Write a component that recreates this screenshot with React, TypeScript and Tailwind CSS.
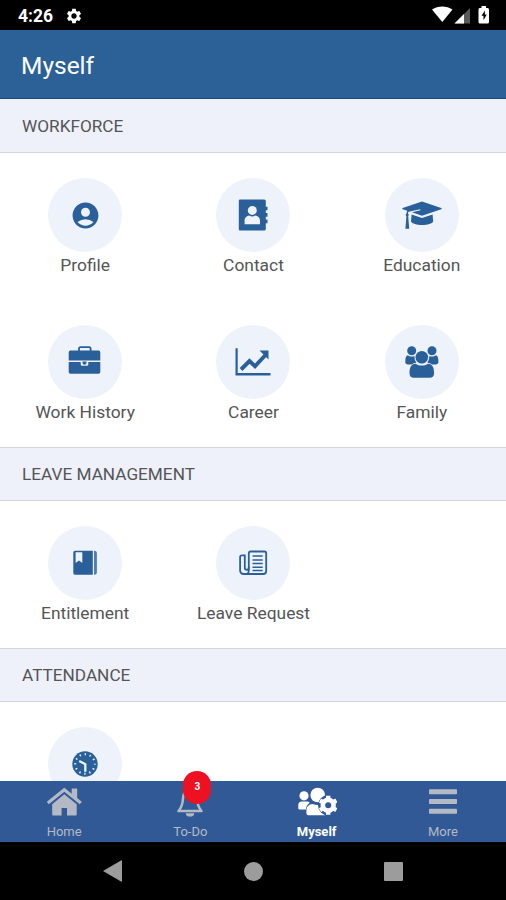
import type { ReactNode } from "react";
import { MdAccountCircle, MdSettings } from "react-icons/md";
import { clsx } from "clsx";

type MenuItem = {
  id: string;
  label?: string;
  icon: ReactNode;
};

type Section = {
  title: string;
  items: MenuItem[];
};

function TileIcon({ children }: { children: ReactNode }) {
  return (
    <svg viewBox="0 0 48 48" className="h-12 w-12" fill="currentColor">
      {children}
    </svg>
  );
}

const sections: Section[] = [
  {
    title: "WORKFORCE",
    items: [
      {
        id: "profile",
        label: "Profile",
        icon: <MdAccountCircle className="h-[31px] w-[31px]" />,
      },
      {
        id: "contact",
        label: "Contact",
        icon: (
          <TileIcon>
            <path d="M11 8.5h24.3a1.5 1.5 0 0 1 1.5 1.5v28a1.5 1.5 0 0 1-1.5 1.5H11a1.2 1.2 0 0 1-1.2-1.2V9.7A1.2 1.2 0 0 1 11 8.500z" />
            <path d="M36 15.700h2.500v3.600H36zM36 22h2.500v3.800H36zM36 28.600h2.500v3.600H36z" />
            <circle cx="23.300" cy="19.400" r="4.500" className="text-[#eef2fb]" />
            <path
              className="text-[#eef2fb]"
              d="M15.600 33.300v-3.600c0-3.200 2.300-5 4.800-5.200.9.6 1.800.9 2.900.9s2-.3 2.900-.9c2.500.2 4.800 2 4.800 5.200v3.600z"
            />
          </TileIcon>
        ),
      },
      {
        id: "education",
        label: "Education",
        icon: (
          <TileIcon>
            <path d="M24 10.500 43.200 17a.7.7 0 0 1 0 1.300L24 24.800l-10-3.500 8.500-2-.3-1-11.500 2.500c-.5.5-.7 1-.8 1.800a1.800 1.800 0 0 1 .3 2.700l1 12.400H7.400l1-12.400a1.800 1.800 0 0 1 .1-2.900c.1-1 .3-1.800.8-2.600l-4.600-1.500a.7.7 0 0 1 0-1.300z" />
            <path d="M13.600 23.600 24 27l10.600-3.400.6 6.900c-1 2-5.700 3.500-11 3.500s-10.200-1.500-11.200-3.500z" />
          </TileIcon>
        ),
      },
      {
        id: "work-history",
        label: "Work History",
        icon: (
          <TileIcon>
            <path
              d="M18 13v-2.200a1.600 1.600 0 0 1 1.600-1.600h8.400a1.600 1.600 0 0 1 1.600 1.600V13"
              fill="none"
              stroke="currentColor"
              strokeWidth="1.800"
            />
            <path d="M9.500 12.600h28a1.800 1.800 0 0 1 1.800 1.800v8.100H7.700v-8.100a1.800 1.800 0 0 1 1.800-1.800z" />
            <path d="M7.700 24h12v2.300a1.500 1.500 0 0 0 1.500 1.500h4.600a1.500 1.500 0 0 0 1.500-1.500V24h12v9.900a1.800 1.800 0 0 1-1.800 1.800h-28a1.800 1.800 0 0 1-1.800-1.800z" />
            <path d="M21.500 23.400h4v1.300a2 2 0 0 1-4 0z" />
          </TileIcon>
        ),
      },
      {
        id: "career",
        label: "Career",
        icon: (
          <TileIcon>
            <path d="M6.500 10.300h2.200v24.800h32.800v2.400h-35z" />
            <path
              d="M12 31.500 20.500 23l5.500 5.200L36.500 17"
              fill="none"
              stroke="currentColor"
              strokeWidth="3.900"
            />
            <path d="M30.500 12.500h9v9z" />
          </TileIcon>
        ),
      },
      {
        id: "family",
        label: "Family",
        icon: (
          <TileIcon>
            <circle cx="13.700" cy="12.800" r="4.500" />
            <circle cx="34" cy="12.800" r="4.500" />
            <circle cx="23.800" cy="19.200" r="6.300" />
            <path d="M9.500 17.300c1.500.9 2.800 1.200 4.200 1.200 1 0 1.800-.1 2.700-.5 0 3 .7 5 2 6.700-2 .2-3.600.8-4.800 1.800H10c-1.700 0-2.700-.9-2.700-2.500 0-3 .3-5.700 2.200-6.700zM38.200 17.300c-1.500.9-2.800 1.200-4.200 1.200-1 0-1.800-.1-2.700-.5 0 3-.7 5-2 6.700 2 .2 3.600.8 4.800 1.800h3.600c1.700 0 2.700-.9 2.700-2.500 0-3-.3-5.700-2.200-6.700z" />
            <path d="M17.500 25.700c2 1.300 4 1.900 6.300 1.900s4.300-.6 6.300-1.900c4.500.1 6 4.300 6 9.500 0 3-1.800 4.500-4.300 4.500h-16c-2.500 0-4.300-1.500-4.300-4.500 0-5.200 1.500-9.400 6-9.500z" />
          </TileIcon>
        ),
      },
    ],
  },
  {
    title: "LEAVE MANAGEMENT",
    items: [
      {
        id: "entitlement",
        label: "Entitlement",
        icon: (
          <TileIcon>
            <path d="M14 11.700h17.800v24H14a1.700 1.700 0 0 1-1.700-1.700V13.400a1.700 1.700 0 0 1 1.700-1.700z" />
            <path d="M33 11.700a2.600 2.600 0 0 1 2.900 2.600v18.800a2.600 2.600 0 0 1-2.900 2.600z" opacity=".8" />
            <path className="text-[#eef2fb]" d="M14.600 13.200h6.700V24L18 21.500 14.600 24z" />
          </TileIcon>
        ),
      },
      {
        id: "leave-request",
        label: "Leave Request",
        icon: (
          <TileIcon>
            <g fill="none" stroke="currentColor" strokeWidth="1.800">
              <path d="M21.500 12.500h14a1.700 1.700 0 0 1 1.700 1.700v17.800a3 3 0 0 1-3 3H14.500a3.400 3.400 0 0 1-3.400-3.400V18a1.700 1.700 0 0 1 1.700-1.700h3v12.200c0 1.500 1 2.300 2 2.300s2-.8 2-2.300V14.200a1.700 1.700 0 0 1 1.700-1.700z" />
              <path d="M19.800 28v3.500c0 1.800-.8 3-2 3.500" />
              <path d="M23.500 17h10.200M23.500 21h10.200M23.500 24.600h10.200M23.500 28.200h10.200M23.500 31.400h10.200" strokeWidth="1.500" />
            </g>
          </TileIcon>
        ),
      },
    ],
  },
  {
    title: "ATTENDANCE",
    items: [
      {
        id: "clock",
        icon: (
          <TileIcon>
            <circle cx="24" cy="24" r="12.700" />
            <circle
              cx="24"
              cy="24"
              r="9.800"
              fill="none"
              stroke="#eef2fb"
              strokeWidth="2"
              strokeDasharray="1.400 3.731"
              strokeDashoffset=".7"
            />
            <path d="M18.200 21 24.300 24.200v7.500" fill="none" stroke="#eef2fb" strokeWidth="2.300" />
          </TileIcon>
        ),
      },
    ],
  },
];

function HomeIcon() {
  return (
    <svg viewBox="0 0 40 32" className="h-8 w-10" fill="currentColor">
      <path d="M27.700 1.500h5.500v10.500l-5.500-4.600z" />
      <path d="m3.800 16 16.500-13.200L36.800 16" fill="none" stroke="currentColor" strokeWidth="3.200" />
      <path d="M20.300 7.300 32.700 17.200v10.200a1 1 0 0 1-1 1H23v-7.500h-5.400v7.500H9.200a1 1 0 0 1-1-1V17.200z" />
    </svg>
  );
}

function BellIcon() {
  return (
    <svg viewBox="0 0 40 32" className="h-8 w-10">
      <path
        d="M20 3.500c-4.600 0-6.800 3.300-7 7.500-.2 5.500-.8 9-4.600 13h23.200c-3.800-4-4.400-7.500-4.600-13-.2-4.200-2.400-7.500-7-7.500z"
        fill="none"
        stroke="currentColor"
        strokeWidth="2.500"
        strokeLinejoin="round"
      />
      <path d="M15.800 26.200h8.400a4.200 3.400 0 0 1-8.400 0z" fill="currentColor" />
    </svg>
  );
}

function PeopleGearIcon() {
  return (
    <svg viewBox="0 0 40 32" className="h-8 w-10" fill="currentColor">
      <circle cx="7" cy="8.800" r="4.600" />
      <circle cx="20.700" cy="8" r="7.300" />
      <path d="M5 14.500h5c1 0 2 .4 2.800 1.200-2.200 1.600-3.600 3.800-4 6.700H2.500a1.200 1.200 0 0 1-1.200-1.200v-3A3.700 3.700 0 0 1 5 14.500z" />
      <path d="M15.500 17c3.300 1.400 7 1.400 10 .2l3 11.100H12a2.600 2.600 0 0 1-2.600-2.600v-2.200c0-3.600 2.700-6.500 6.100-6.500z" />
      <circle cx="31.200" cy="18.300" r="10.200" className="text-[#305996]" />
      <circle cx="31.200" cy="18.300" r="5.300" fill="none" stroke="currentColor" strokeWidth="4.800" />
      <path
        d="M31.200 8.800v19M23 13.500l16.400 9.600M23 23.100l16.400-9.600"
        stroke="currentColor"
        strokeWidth="4.400"
      />
      <circle cx="31.200" cy="18.300" r="3" className="text-[#305996]" />
    </svg>
  );
}

function MenuIcon() {
  return (
    <svg viewBox="0 0 40 32" className="h-8 w-10" fill="currentColor">
      <rect x="6" y="2.300" width="28" height="5" rx=".8" />
      <rect x="6" y="12" width="28" height="5" rx=".8" />
      <rect x="6" y="21.700" width="28" height="5" rx=".8" />
    </svg>
  );
}

const tabs = [
  { label: "Home", icon: <HomeIcon /> },
  { label: "To-Do", icon: <BellIcon />, badge: 3 },
  { label: "Myself", icon: <PeopleGearIcon /> },
  { label: "More", icon: <MenuIcon /> },
];

function StatusBar() {
  return (
    <div className="flex h-[30px] shrink-0 items-center justify-between bg-black pl-[18px] pr-4 text-white">
      <div className="flex items-center gap-3 pt-[2px]">
        <span className="pt-px text-[17.5px] leading-none font-bold">4:26</span>
        <MdSettings className="h-[18px] w-[18px]" />
      </div>
      <svg viewBox="0 0 58 18" className="h-[18px] w-[58px]" fill="currentColor">
        <path d="M0 3.500C6-.6 14.500-.6 20.500 3.500L10.300 16z" />
        <path d="M38 2v15.500H22.500z" opacity=".35" />
        <path d="M32 8v9.500h-9.500z" />
        <path d="M48.500 2h1V0h4.500v2h1.500a1.500 1.500 0 0 1 1.500 1.500v12.500a1.500 1.500 0 0 1-1.500 1.500h-7.500a1.500 1.500 0 0 1-1.500-1.500V3.500A1.500 1.500 0 0 1 48.500 2z" />
        <path d="m53 4.500-3.500 5.300h2v4.500l3.300-5.700h-2z" fill="#000" />
      </svg>
    </div>
  );
}

function MenuTile({ label, icon }: Omit<MenuItem, "id">) {
  return (
    <div className="flex h-[147px] flex-col items-center pt-[25px]">
      <div className="flex h-[74px] w-[74px] shrink-0 items-center justify-center rounded-full bg-[#eef2fb] text-[#2a6099]">
        {icon}
      </div>
      {label && <span className="text-[17.4px] leading-[26px] text-[#555]">{label}</span>}
    </div>
  );
}

export default function App() {
  const activeTab = "Myself";

  return (
    <div className="flex h-[900px] w-[506px] flex-col overflow-hidden bg-white font-[Roboto,sans-serif]">
      <StatusBar />
      <header className="flex h-[69px] shrink-0 items-center border-b border-[#17497e] bg-[#2c6197] pt-1 pl-[21px]">
        <h1 className="text-[24.5px] leading-none text-white">Myself</h1>
      </header>

      <main className="min-h-0 flex-1 overflow-hidden">
        {sections.map((section, i) => (
          <section key={section.title}>
            <h2
              className={clsx(
                "flex h-[54px] items-center border-b border-[#d3d6dc] bg-[#eef1fa] pl-[22px] text-[17.2px] text-[#555]",
                i === 0 ? "pt-[2px]" : "border-t pt-px"
              )}
            >
              {section.title}
            </h2>
            <div className="grid grid-cols-3 pl-px">
              {section.items.map((item) => (
                <MenuTile key={item.id} label={item.label} icon={item.icon} />
              ))}
            </div>
          </section>
        ))}
      </main>

      <nav className="grid h-[61px] shrink-0 grid-cols-4 bg-[#305996] pl-px">
        {tabs.map((tab) => (
          <div
            key={tab.label}
            className={clsx(
              "relative flex flex-col items-center pt-[6px]",
              tab.label === activeTab ? "font-bold text-white" : "text-[#b4bac5]"
            )}
          >
            {tab.icon}
            <span className="mt-[5px] text-[13px] leading-4">{tab.label}</span>
            {tab.badge && (
              <span className="absolute -top-[10px] left-[56px] flex h-[33px] w-7 items-center justify-center rounded-full bg-[#ee1122] pb-[3px] text-[10px] font-bold text-white">
                {tab.badge}
              </span>
            )}
          </div>
        ))}
      </nav>

      <div className="flex h-[58px] shrink-0 items-center justify-between bg-black px-[103px] text-[#9c9c9c]">
        <svg viewBox="0 0 19 22" className="h-[22px] w-[19px]" fill="currentColor">
          <path d="M0 11 18 .4a.6.6 0 0 1 1 .5v20.200a.6.6 0 0 1-1 .5z" />
        </svg>
        <div className="h-[19px] w-[19px] rounded-full bg-[#9c9c9c]" />
        <div className="h-[19px] w-[19px] rounded-[1px] bg-[#9c9c9c]" />
      </div>
    </div>
  );
}
